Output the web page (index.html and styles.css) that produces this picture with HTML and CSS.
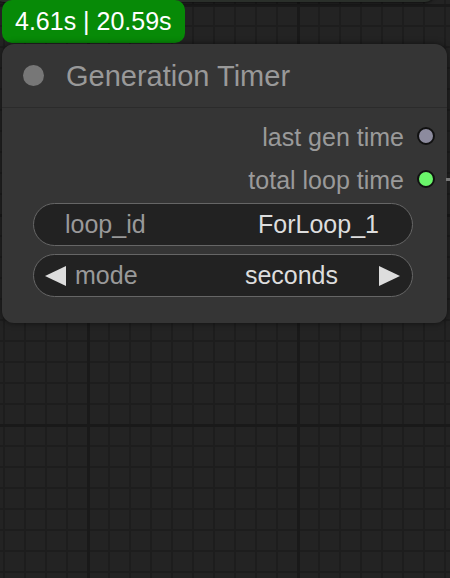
FILE: index.html
```html
<!DOCTYPE html>
<html>
<head>
<meta charset="utf-8">
<link rel="stylesheet" href="styles.css">
</head>
<body>
<div class="canvas">
  <div class="prev-node"></div>
  <div class="badge">4.61s | 20.59s</div>
  <div class="node">
    <div class="title">
      <span class="title-dot"></span>
      <span class="title-text">Generation Timer</span>
    </div>
    <div class="outputs">
      <div class="out-row"><span class="out-label">last gen time</span><span class="slot slot-gray"></span></div>
      <div class="out-row"><span class="out-label">total loop time</span><span class="slot slot-green"></span><span class="link"></span></div>
    </div>
    <div class="widgets">
      <div class="widget">
        <span class="w-label">loop_id</span>
        <span class="w-value">ForLoop_1</span>
      </div>
      <div class="widget combo">
        <span class="arrow arrow-left"></span>
        <span class="w-label">mode</span>
        <span class="w-value">seconds</span>
        <span class="arrow arrow-right"></span>
      </div>
    </div>
  </div>
</div>
</body>
</html>
```

FILE: styles.css
```css
html, body {
  margin: 0;
  padding: 0;
}
body {
  width: 450px;
  height: 578px;
  overflow: hidden;
  font-family: "Liberation Sans", Arial, sans-serif;
}
.canvas {
  position: relative;
  width: 450px;
  height: 578px;
  overflow: hidden;
  background-color: #232323;
  background-image:
    linear-gradient(to right, #191919 0, #191919 3px, transparent 3px),
    linear-gradient(to bottom, #191919 0, #191919 3px, transparent 3px),
    linear-gradient(to right, #1d1d1d 0, #1d1d1d 2px, transparent 2px),
    linear-gradient(to bottom, #1d1d1d 0, #1d1d1d 2px, transparent 2px);
  background-size: 210px 210px, 210px 210px, 21px 21px, 21px 21px;
  background-position: 87px 0, 0 214px, 3px 0, 0 4px;
}
.prev-node {
  position: absolute;
  left: -6px;
  top: -12px;
  width: 441px;
  height: 14px;
  border-radius: 0 0 10px 10px;
  background: #2a2f2a;
  box-shadow: 0 1px 3px rgba(0,0,0,0.6);
}
.badge {
  position: relative;
  margin-left: 2px;
  width: 183px;
  height: 43px;
  box-sizing: border-box;
  padding-left: 13px;
  background: #078a07;
  border-radius: 10px;
  color: #fff;
  font-size: 25px;
  line-height: 43px;
  white-space: nowrap;
}
.node {
  position: relative;
  margin: 1px 3px 0 2px;
  height: 279px;
  background: #353535;
  border-radius: 12px;
  box-shadow: 0 0 6px rgba(0,0,0,0.55);
  box-sizing: border-box;
}
.title {
  height: 63px;
  border-bottom: 1px solid #2b2b2b;
  display: flex;
  align-items: center;
  padding-left: 21px;
}
.title-dot {
  width: 21px;
  height: 21px;
  border-radius: 50%;
  background: #777;
  flex: none;
}
.title-text {
  margin-left: 22px;
  color: #999;
  font-size: 29px;
  margin-top: 2px;
}
.outputs {
  padding-top: 8px;
}
.out-row {
  position: relative;
  height: 43px;
  display: flex;
  align-items: center;
  justify-content: flex-end;
  padding-right: 12px;
}
.out-label {
  color: #9a9a9a;
  font-size: 25px;
  margin-right: 13px;
}
.slot {
  width: 14px;
  height: 14px;
  border-radius: 50%;
  border: 2px solid #111;
  flex: none;
  margin-top: -4px;
}
.slot-gray { background: #8c8b9e; }
.slot-green { background: #6af56a; }
.link {
  position: absolute;
  right: -4px;
  top: 19px;
  width: 5px;
  height: 3px;
  background: #777;
}
.widgets {
  margin: 1px 34px 0 31px;
  display: flex;
  flex-direction: column;
  gap: 8px;
}
.widget {
  height: 43px;
  box-sizing: border-box;
  border: 1.5px solid #666;
  border-radius: 22px;
  background: #222;
  display: flex;
  align-items: center;
  padding: 0 33px 0 31px;
  font-size: 25px;
}
.w-label {
  color: #999;
}
.w-value {
  margin-left: auto;
  color: #ddd;
}
.combo {
  padding: 0 12px 0 11px;
}
.combo .w-label {
  margin-left: 9px;
}
.combo .w-value {
  margin-right: 41px;
}
.arrow {
  width: 0;
  height: 0;
  border-top: 10.5px solid transparent;
  border-bottom: 10.5px solid transparent;
  flex: none;
}
.arrow-left {
  border-right: 21px solid #ddd;
}
.arrow-right {
  border-left: 21px solid #ddd;
}
```
